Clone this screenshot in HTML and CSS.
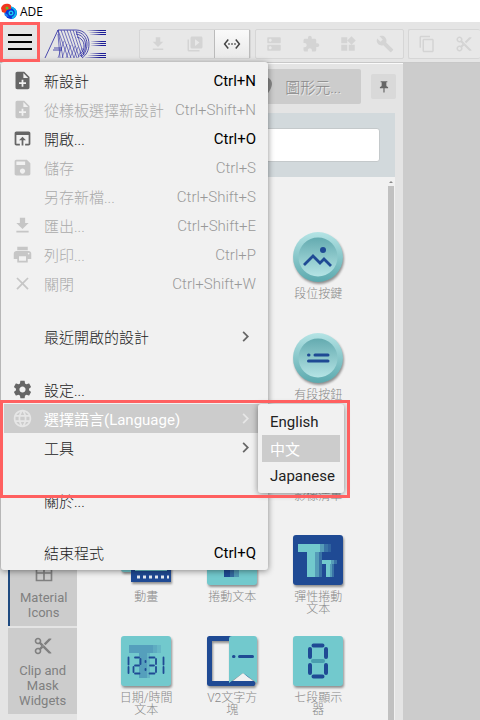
FILE: index.html
```html
<!DOCTYPE html>
<html lang="zh-Hant">
<head>
<meta charset="utf-8">
<meta name="viewport" content="width=device-width, initial-scale=1">
<title>ADE</title>
<link rel="stylesheet" href="styles.css">
</head>
<body>
<svg class="sprite" aria-hidden="true">
  <symbol id="note-add" viewBox="0 0 24 24"><path d="M14 2H6c-1.1 0-1.99.9-1.99 2L4 20c0 1.1.89 2 1.99 2H18c1.1 0 2-.9 2-2V8l-6-6zm2 14h-3v3h-2v-3H8v-2h3v-3h2v3h3v2zm-3-7V3.5L18.500 9H13z"/></symbol>
  <symbol id="open" viewBox="0 0 24 24"><path d="M19 4H5c-1.110 0-2 .9-2 2v12c0 1.1.89 2 2 2h4v-2H5V8h14v10h-4v2h4c1.100 0 2-.9 2-2V6c0-1.100-.89-2-2-2zm-7 6l-4 4h3v6h2v-6h3l-4-4z"/></symbol>
  <symbol id="save" viewBox="0 0 24 24"><path d="M17 3H5c-1.110 0-2 .9-2 2v14c0 1.100.89 2 2 2h14c1.100 0 2-.9 2-2V7l-4-4zm-5 16c-1.660 0-3-1.340-3-3s1.340-3 3-3 3 1.340 3 3-1.340 3-3 3zm3-10H5V5h10v4z"/></symbol>
  <symbol id="download" viewBox="0 0 24 24"><path d="M19 9h-4V3H9v6H5l7 7 7-7zM5 18v2h14v-2H5z"/></symbol>
  <symbol id="print" viewBox="0 0 24 24"><path d="M19 8H5c-1.660 0-3 1.340-3 3v6h4v4h12v-4h4v-6c0-1.660-1.340-3-3-3zm-3 11H8v-5h8v5zm3-7c-.55 0-1-.45-1-1s.45-1 1-1 1 .45 1 1-.45 1-1 1zm-1-9H6v4h12V3z"/></symbol>
  <symbol id="close" viewBox="0 0 24 24"><path d="M19 6.410L17.590 5 12 10.590 6.410 5 5 6.410 10.590 12 5 17.590 6.410 19 12 13.410 17.590 19 19 17.590 13.410 12z"/></symbol>
  <symbol id="settings" viewBox="0 0 24 24"><path d="M19.43 12.98c.04-.32.07-.64.07-.98s-.03-.66-.07-.98l2.11-1.65c.19-.15.24-.42.12-.64l-2-3.46c-.12-.22-.39-.3-.61-.22l-2.49 1c-.52-.4-1.08-.73-1.69-.98l-.38-2.65C14.46 2.18 14.25 2 14 2h-4c-.25 0-.46.18-.49.42l-.38 2.65c-.61.25-1.17.59-1.69.98l-2.49-1c-.23-.09-.49 0-.61.22l-2 3.46c-.13.22-.07.49.12.64l2.11 1.65c-.04.32-.07.65-.07.98s.03.66.07.98l-2.11 1.65c-.19.15-.24.42-.12.64l2 3.46c.12.22.39.3.61.22l2.49-1c.52.4 1.08.73 1.69.98l.38 2.65c.03.24.24.42.49.42h4c.25 0 .46-.18.49-.42l.38-2.65c.61-.25 1.17-.59 1.69-.98l2.49 1c.23.09.49 0 .61-.22l2-3.46c.12-.22.07-.49-.12-.64l-2.11-1.65zM12 15.5c-1.93 0-3.5-1.57-3.5-3.5s1.57-3.5 3.5-3.5 3.5 1.57 3.5 3.5-1.57 3.5-3.5 3.5z"/></symbol>
  <symbol id="globe" viewBox="0 0 24 24"><path d="M11.99 2C6.47 2 2 6.48 2 12s4.47 10 9.99 10C17.52 22 22 17.52 22 12S17.52 2 11.99 2zm6.93 6h-2.95c-.32-1.25-.78-2.45-1.38-3.56 1.84.63 3.37 1.91 4.33 3.56zM12 4.04c.83 1.2 1.48 2.53 1.91 3.96h-3.82c.43-1.43 1.08-2.76 1.91-3.96zM4.26 14C4.1 13.36 4 12.69 4 12s.1-1.36.26-2h3.38c-.08.66-.14 1.32-.14 2 0 .68.06 1.34.14 2H4.26zm.82 2h2.95c.32 1.25.78 2.45 1.38 3.56-1.84-.63-3.37-1.9-4.33-3.56zm2.95-8H5.08c.96-1.66 2.49-2.93 4.33-3.56C8.81 5.55 8.35 6.75 8.03 8zM12 19.96c-.83-1.2-1.48-2.53-1.91-3.96h3.82c-.43 1.43-1.08 2.76-1.91 3.96zM14.34 14H9.66c-.09-.66-.16-1.32-.16-2 0-.68.07-1.35.16-2h4.68c.09.65.16 1.32.16 2 0 .68-.07 1.34-.16 2zm.25 5.56c.6-1.11 1.06-2.31 1.38-3.56h2.95c-.96 1.65-2.49 2.93-4.33 3.56zM16.36 14c.08-.66.14-1.32.14-2 0-.68-.06-1.34-.14-2h3.38c.16.64.26 1.31.26 2s-.1 1.36-.26 2h-3.38z"/></symbol>
  <symbol id="chevron" viewBox="0 0 24 24"><path d="M10 6L8.59 7.41 13.17 12l-4.58 4.59L10 18l6-6z"/></symbol>
  <symbol id="video" viewBox="0 0 24 24"><path d="M4 6H2v14c0 1.1.9 2 2 2h14v-2H4V6zm16-4H8c-1.1 0-2 .9-2 2v12c0 1.1.9 2 2 2h12c1.1 0 2-.9 2-2V4c0-1.1-.9-2-2-2zm-8 12.5v-9l6 4.5-6 4.5z"/></symbol>
  <symbol id="connect" viewBox="0 0 24 24"><path d="M7.77 6.76L6.23 5.48.82 12l5.41 6.52 1.54-1.28L3.42 12l4.35-5.24zM7 13h2v-2H7v2zm10-2h-2v2h2v-2zm-6 2h2v-2h-2v2zm6.77-7.52l-1.54 1.28L20.58 12l-4.35 5.24 1.54 1.28L23.18 12l-5.41-6.52z"/></symbol>
  <symbol id="dns" viewBox="0 0 24 24"><path d="M20 13H4c-.55 0-1 .45-1 1v6c0 .55.45 1 1 1h16c.55 0 1-.45 1-1v-6c0-.55-.45-1-1-1zM7 19c-1.1 0-2-.9-2-2s.9-2 2-2 2 .9 2 2-.9 2-2 2zM20 3H4c-.55 0-1 .45-1 1v6c0 .55.45 1 1 1h16c.55 0 1-.45 1-1V4c0-.55-.45-1-1-1zM7 9c-1.1 0-2-.9-2-2s.9-2 2-2 2 .9 2 2-.9 2-2 2z"/></symbol>
  <symbol id="extension" viewBox="0 0 24 24"><path d="M20.5 11H19V7c0-1.1-.9-2-2-2h-4V3.5C13 2.12 11.88 1 10.5 1S8 2.12 8 3.5V5H4c-1.1 0-1.99.9-1.99 2v3.8H3.5c1.49 0 2.7 1.21 2.7 2.7s-1.21 2.7-2.7 2.7H2V20c0 1.1.9 2 2 2h3.8v-1.5c0-1.49 1.21-2.7 2.7-2.7 1.49 0 2.7 1.21 2.7 2.7V22H17c1.1 0 2-.9 2-2v-4h1.5c1.38 0 2.500-1.12 2.500-2.5S21.88 11 20.5 11z"/></symbol>
  <symbol id="widgets" viewBox="0 0 24 24"><path d="M13 13v8h8v-8h-8zM3 21h8v-8H3v8zM3 3v8h8V3H3zm13.66-1.31L11 7.34 16.66 13l5.66-5.66-5.66-5.65z"/></symbol>
  <symbol id="build" viewBox="0 0 24 24"><path d="M22.7 19l-9.1-9.1c.9-2.3.4-5-1.5-6.9-2-2-5-2.4-7.4-1.3L9 6 6 9 1.6 4.7C.4 7.1.9 10.1 2.9 12.1c1.9 1.9 4.6 2.4 6.9 1.5l9.1 9.1c.4.4 1 .4 1.4 0l2.3-2.3c.5-.4.5-1.1.1-1.4z"/></symbol>
  <symbol id="copy" viewBox="0 0 24 24"><path d="M16 1H4c-1.1 0-2 .9-2 2v14h2V3h12V1zm3 4H8c-1.1 0-2 .9-2 2v14c0 1.1.9 2 2 2h11c1.1 0 2-.9 2-2V7c0-1.1-.9-2-2-2zm0 16H8V7h11v14z"/></symbol>
  <symbol id="cut" viewBox="0 0 24 24"><path d="M9.64 7.64c.23-.5.36-1.05.36-1.64 0-2.21-1.79-4-4-4S2 3.79 2 6s1.79 4 4 4c.59 0 1.14-.13 1.64-.36L10 12l-2.36 2.36C7.14 14.13 6.59 14 6 14c-2.21 0-4 1.79-4 4s1.79 4 4 4 4-1.79 4-4c0-.59-.13-1.14-.36-1.64L12 14l7 7h3v-1L9.64 7.64zM6 8c-1.1 0-2-.89-2-2s.9-2 2-2 2 .89 2 2-.9 2-2 2zm0 12c-1.1 0-2-.89-2-2s.9-2 2-2 2 .89 2 2-.9 2-2 2zm6-7.5c-.28 0-.5-.22-.5-.5s.22-.5.5-.5.5.22.5.5-.22.5-.5.5zM19 3l-6 6 2 2 7-7V3z"/></symbol>
  <symbol id="place" viewBox="0 0 24 24"><path d="M12 2C8.13 2 5 5.13 5 9c0 5.25 7 13 7 13s7-7.75 7-13c0-3.87-3.13-7-7-7zm0 9.5c-1.38 0-2.5-1.12-2.5-2.5s1.12-2.5 2.5-2.5 2.5 1.12 2.5 2.5-1.12 2.5-2.5 2.5z"/></symbol>
  <symbol id="pin" viewBox="0 0 24 24"><path d="M16 9V4h1c.55 0 1-.45 1-1s-.45-1-1-1H7c-.55 0-1 .45-1 1s.45 1 1 1h1v5c0 1.66-1.34 3-3 3v2h5.97v7l1 1 1-1v-7H19v-2c-1.66 0-3-1.34-3-3z"/></symbol>
  <symbol id="grid" viewBox="0 0 24 24"><path fill="none" stroke="currentColor" stroke-width="2" d="M3 2h18v19H3zM12 2v19M3 12h18"/></symbol>
</svg>

<header class="titlebar">
  <svg class="app-icon" viewBox="0 0 16 16" aria-hidden="true">
    <circle cx="10" cy="10" r="6" fill="#0a35d8"/>
    <path d="M5 5c3-2 7-1 9 2s0 7-3 8" fill="none" stroke="#0cb7ee" stroke-width="2"/>
    <circle cx="10" cy="10" r="2.500" fill="#19c9f2"/><circle cx="10" cy="10" r="1" fill="#0726a8"/>
    <path d="M0 5C1 1 5 0 8 1s2 3 2 5L6 7l-2 3-3-1z" fill="#f2361d"/>
    <path d="M3 10l3 1 2 3-4-1z" fill="#1d7df0"/>
    <circle cx="6" cy="5" r="1.500" fill="#58c22e"/>
  </svg>
  <span>ADE</span>
</header>

<div class="toolbar">
  <button class="menu-button" aria-label="Menu"><i></i><i></i><i></i></button>
  <svg class="logo" viewBox="0 0 62 30" aria-hidden="true">
    <defs>
      <linearGradient id="fade" x1="0" x2="1"><stop offset="0" stop-color="#1c1c96" stop-opacity=".1"/><stop offset=".7" stop-color="#1c1c96"/></linearGradient>
    </defs>
    <g fill="none" stroke="#2424a0" stroke-width=".8">
      <path d="M1 29L14 1M10 19h8M9 21h9"/>
      <path d="M14 1L24 29M17 1L27 29M20 1L30 29M23 1L33 29M26 1L35 28M29 1L38 28M32 2L40 26M14 1L19 29M14 5L16 29" opacity=".75"/>
      <path d="M14 29L20 12M18 29L23 15M22 29L27 16M26 29L31 17M30 29L34 18M34 29L38 19" opacity=".6"/>
      <path d="M14 1H32C41 1 45 8 45 15S42 26 38 29M32 3C39 3 43 9 43 15S40 26 37 28M32 5C38 6 41.500 10 41.500 16S39 25 36 27M33 8C37 9 40 12 40 17S38 23 36 25"/>
    </g>
    <g fill="url(#fade)">
      <rect x="43" y="1" width="19" height="1"/><rect x="45" y="3" width="17" height="1"/><rect x="46" y="5" width="16" height="1"/>
      <rect x="47" y="12" width="15" height="1"/><rect x="47" y="14" width="15" height="1"/><rect x="47" y="16" width="15" height="1"/>
      <rect x="46" y="24" width="16" height="1"/><rect x="44" y="26" width="18" height="1"/><rect x="41" y="28" width="21" height="1"/>
    </g>
  </svg>
  <div class="tool-group">
    <button disabled aria-label="Download"><svg><use href="#download"/></svg></button>
    <button disabled aria-label="Simulate"><svg><use href="#video"/></svg></button>
    <button class="active" aria-label="Connect"><svg><use href="#connect"/></svg></button>
  </div>
  <div class="tool-group">
    <button disabled aria-label="Resources"><svg><use href="#dns"/></svg></button>
    <button disabled aria-label="Extensions"><svg><use href="#extension"/></svg></button>
    <button disabled aria-label="Widgets"><svg><use href="#widgets"/></svg></button>
    <button disabled aria-label="Tools"><svg><use href="#build"/></svg></button>
  </div>
  <div class="tool-group tail">
    <button disabled aria-label="Copy"><svg><use href="#copy"/></svg></button>
    <button disabled aria-label="Cut"><svg><use href="#cut"/></svg></button>
  </div>

  <nav class="menu">
    <ul>
      <li><button><svg><use href="#note-add"/></svg><span>新設計</span><kbd>Ctrl+N</kbd></button></li>
      <li><button disabled><svg><use href="#note-add"/></svg><span>從樣板選擇新設計</span><kbd>Ctrl+Shift+N</kbd></button></li>
      <li><button><svg><use href="#open"/></svg><span>開啟...</span><kbd>Ctrl+O</kbd></button></li>
      <li><button disabled><svg><use href="#save"/></svg><span>儲存</span><kbd>Ctrl+S</kbd></button></li>
      <li><button disabled><svg></svg><span>另存新檔...</span><kbd>Ctrl+Shift+S</kbd></button></li>
      <li><button disabled><svg><use href="#download"/></svg><span>匯出...</span><kbd>Ctrl+Shift+E</kbd></button></li>
      <li><button disabled><svg><use href="#print"/></svg><span>列印...</span><kbd>Ctrl+P</kbd></button></li>
      <li><button disabled><svg><use href="#close"/></svg><span>關閉</span><kbd>Ctrl+Shift+W</kbd></button></li>
      <li class="split"><button><svg></svg><span>最近開啟的設計</span><svg class="more"><use href="#chevron"/></svg></button></li>
      <li class="split"><button><svg><use href="#settings"/></svg><span>設定...</span></button></li>
      <li class="selected">
        <button><svg><use href="#globe"/></svg><span>選擇語言(Language)</span><svg class="more"><use href="#chevron"/></svg></button>
        <ul class="submenu">
          <li><button>English</button></li>
          <li><button class="current">中文</button></li>
          <li><button>Japanese</button></li>
        </ul>
      </li>
      <li><button><svg></svg><span>工具</span><svg class="more"><use href="#chevron"/></svg></button></li>
      <li class="split"><button><svg></svg><span>關於...</span></button></li>
      <li class="split"><button><svg></svg><span>結束程式</span><kbd>Ctrl+Q</kbd></button></li>
    </ul>
  </nav>
</div>

<main class="workspace">
  <section class="panel">
    <div class="panel-head">
      <button class="panel-tab"><svg><use href="#place"/></svg><span>圖形元...</span></button>
      <button class="pin" aria-label="Pin"><svg><use href="#pin"/></svg></button>
    </div>
    <div class="panel-body">
      <div class="side-tabs">
        <button class="current"><svg><use href="#grid"/></svg>Material Icons</button>
        <button><svg><use href="#cut"/></svg>Clip and Mask Widgets</button>
      </div>
      <div class="library">
        <div class="search"><input type="text" aria-label="Search"></div>
        <div class="scroll">
          <div class="tiles">
            <figure class="c3 r1">
              <svg viewBox="0 0 50 50"><defs><linearGradient id="rim" x2="0" y2="1"><stop stop-color="#b5e4e5"/><stop offset="1" stop-color="#5ba9ae"/></linearGradient><linearGradient id="dish" x2="0" y2="1"><stop stop-color="#64abb0"/><stop offset="1" stop-color="#b5e4e5"/></linearGradient></defs>
                <circle cx="25" cy="25" r="25" fill="url(#rim)"/><circle cx="25" cy="25" r="19.500" fill="url(#dish)"/>
                <circle cx="30" cy="18" r="3" fill="#1f4a94"/><path d="M11 33l9-9 7 7 4-4 7 7" fill="none" stroke="#1f4a94" stroke-width="2.800"/></svg>
              <figcaption>段位按鍵</figcaption>
            </figure>
            <figure class="c3 r2">
              <svg viewBox="0 0 50 50"><circle cx="25" cy="25" r="25" fill="url(#rim)"/><circle cx="25" cy="25" r="19.500" fill="url(#dish)"/>
                <path d="M15.500 22h.5M22 22h13M15.500 28h19.500" fill="none" stroke="#1f4a94" stroke-width="3" stroke-linecap="round"/></svg>
              <figcaption>有段按鈕</figcaption>
            </figure>
            <figure class="c3 r3">
              <svg viewBox="0 0 50 50"><rect x="2" y="3" width="46" height="44" rx="3" fill="#72c9cd"/></svg>
              <figcaption>影像清單</figcaption>
            </figure>
            <figure class="c1 r4">
              <svg viewBox="0 0 50 50"><rect x="0" y="2" width="14" height="35" rx="3" fill="#72c9cd"/><rect x="10" y="8" width="40" height="39" fill="#1f4a94"/><rect x="14" y="14" width="32" height="22" fill="#72c9cd"/>
                <path d="M16 42h32" stroke="#e4e9ef" stroke-width="3" stroke-dasharray="3 3"/></svg>
              <figcaption>動畫</figcaption>
            </figure>
            <figure class="c2 r4">
              <svg viewBox="0 0 50 50"><rect width="50" height="50" rx="3" fill="#72c9cd"/><rect x="17" y="14" width="6" height="28" fill="#1f4a94"/><rect x="23" y="14" width="4" height="28" fill="#34699f"/><rect x="27" y="14" width="5" height="28" fill="#5198b4"/></svg>
              <figcaption>捲動文本</figcaption>
            </figure>
            <figure class="c3 r4">
              <svg viewBox="0 0 50 50"><rect width="50" height="50" rx="3" fill="#1f4a94"/>
                <g fill="#72c9cd"><rect x="5" y="9" width="22" height="8"/><rect x="14" y="9" width="8" height="33"/><rect x="28" y="25" width="10" height="4"/><rect x="33" y="25" width="4" height="17"/></g>
                <g fill="#559cb8"><rect x="27" y="9" width="4" height="8"/><rect x="22" y="17" width="4" height="25"/><rect x="38" y="25" width="3" height="4"/><rect x="37" y="29" width="2" height="13"/></g>
                <g fill="#3a73a6"><rect x="31" y="9" width="4" height="8"/><rect x="26" y="17" width="3" height="25"/><rect x="41" y="25" width="3" height="4"/><rect x="39" y="29" width="2" height="13"/><rect x="35" y="9" width="3" height="8" opacity=".6"/></g></svg>
              <figcaption>彈性捲動文本</figcaption>
            </figure>
            <figure class="c1 r5">
              <svg viewBox="0 0 50 50"><rect width="50" height="50" rx="3" fill="#72c9cd"/>
                <g fill="#559fbc"><rect x="8" y="9" width="24" height="8"/><rect x="18" y="17" width="8" height="25"/><rect x="32" y="9" width="4" height="8" opacity=".7"/><rect x="36" y="9" width="4" height="8" opacity=".4"/><rect x="26" y="17" width="3" height="25" opacity=".5"/></g>
                <path d="M7.500 21.500v7M7.500 31v6M14 21.500h4M19.500 23v5M14 29.500h4M12.500 31v5M14 37.500h4.500M28.500 21.500h5M35 23v5M29 29.500h4M35 31v5M28.500 37.500h5M42.500 21.500v7M42.500 31v6M24.500 25v1M24.500 33v1" fill="none" stroke="#1f4a94" stroke-width="1.800" stroke-linecap="round"/></svg>
              <figcaption>日期/時間文本</figcaption>
            </figure>
            <figure class="c2 r5">
              <svg viewBox="0 0 50 50"><path d="M2.500 2.500H40V47.500H2.500z" fill="none" stroke="#1f4a94" stroke-width="5" stroke-linejoin="round"/><path d="M5 45h42a3 3 0 0 1 0 5H5z" fill="#1f4a94"/>
                <path d="M26 45l10-8 10 8z" fill="#f1f1f1"/><path d="M22 47V3a3 3 0 0 1 3-3h22a3 3 0 0 1 3 3v44L36 37z" fill="#72c9cd"/>
                <path d="M26.500 20.500h.5M32.500 20.500h13" stroke="#1f4a94" stroke-width="3" stroke-linecap="round"/></svg>
              <figcaption>V2文字方塊</figcaption>
            </figure>
            <figure class="c3 r5">
              <svg viewBox="0 0 50 50"><rect width="50" height="50" rx="3" fill="#72c9cd"/><path d="M20 25h10" stroke="#4a9eaf" stroke-width="4" stroke-linecap="round"/>
                <path d="M20.500 9.500h9M20.500 40.500h9M17 13v8M33 13v8M17 29v8M33 29v8" stroke="#1f4a94" stroke-width="4" stroke-linecap="round"/></svg>
              <figcaption>七段顯示器</figcaption>
            </figure>
          </div>
          <div class="scrollbar"><i class="arrow"></i><i class="thumb"></i></div>
        </div>
      </div>
    </div>
  </section>
  <section class="canvas"></section>
</main>

<div class="mark mark-button"></div>
<div class="mark mark-language"></div>
</body>
</html>
```

FILE: styles.css
```css
* { box-sizing: border-box; }

body {
  margin: 0;
  height: 100vh;
  position: relative;
  display: flex;
  flex-direction: column;
  overflow: hidden;
  background: #ccc;
  color: #222;
  font-family: Roboto, "Noto Sans CJK TC", sans-serif;
  font-size: 15px;
}

button {
  margin: 0;
  padding: 0;
  border: 0;
  background: none;
  color: inherit;
  font: inherit;
}

svg { fill: currentColor; flex: none; }
ul { list-style: none; margin: 0; padding: 0; }
.sprite { position: absolute; width: 0; height: 0; }

.titlebar {
  flex: none;
  display: flex;
  align-items: center;
  gap: 3px;
  height: 22px;
  padding-left: 1px;
  background: #fff;
  color: #000;
  font-family: "Open Sans", sans-serif;
  font-size: 12px;
}
.app-icon { width: 16px; height: 16px; }

.toolbar {
  flex: none;
  position: relative;
  z-index: 2;
  display: flex;
  align-items: flex-end;
  gap: 4px;
  height: 41px;
  padding-bottom: 3px;
  background: #e5e5e5;
  border-bottom: 1px solid #c8c8c8;
}
.menu-button {
  flex: none;
  display: flex;
  flex-direction: column;
  gap: 5px;
  width: 40px;
  padding: 0 8px 9px;
}
.menu-button i { height: 2px; background: #000; }
.logo { width: 62px; height: 30px; margin-right: 29px; }

.tool-group {
  flex: none;
  display: flex;
  gap: 1px;
  height: 30px;
  border: 1px solid #d6d6d6;
  border-radius: 2px;
  background: #e8e8e8;
}
.tool-group button {
  flex: none;
  display: flex;
  align-items: center;
  justify-content: center;
  width: 36px;
  color: #444;
}
.tool-group svg { width: 18px; height: 18px; }
.tool-group button:disabled { color: #d4d4d4; }
.tool-group .active {
  border: solid #bbb;
  border-width: 0 1px;
  background: linear-gradient(#fafafa, #e9e9e9);
}
.tail { flex: 1; min-width: 0; overflow: hidden; border-right: 0; }

.menu {
  position: absolute;
  top: 40px;
  left: 1px;
  width: 267px;
  padding: 4px 3px 3px;
  border-radius: 3px;
  background: #f1f1f1;
  box-shadow: 0 1px 6px rgba(0, 0, 0, .45);
}
.menu li { position: relative; }
.menu button {
  display: flex;
  align-items: center;
  width: 100%;
  height: 29px;
  padding: 0 9px 0 8px;
  text-align: left;
  white-space: nowrap;
}
.menu svg { width: 21px; height: 21px; color: #666; }
.menu span { margin-left: 11px; font-weight: 300; }
.menu kbd { margin-left: auto; font: inherit; color: #000; }
.menu .more { margin-left: auto; }
.menu button:disabled, .menu button:disabled kbd { color: #aaa; }
.menu button:disabled kbd { font-weight: 300; color: #999; }
.menu button:disabled svg { color: #c6c6c6; }
.menu .split { margin-top: 24px; }
.menu .split:last-child { margin-top: 23px; }
.menu .selected > button { background: #ccc; color: #fff; }
.menu .selected > button svg { color: #e6e6e6; }
.menu .selected > button span { font-weight: 400; }

.submenu {
  position: absolute;
  top: 0;
  left: calc(100% - 7px);
  width: 86px;
  padding: 4px;
  border-radius: 3px;
  background: #f1f1f1;
  box-shadow: 0 1px 6px rgba(0, 0, 0, .45);
}
.submenu button { height: 27px; padding: 0 8px; }
.submenu .current { background: #ccc; color: #fff; }

.workspace {
  flex: 1;
  min-height: 0;
  display: flex;
}
.panel {
  flex: 0 1 403px;
  display: flex;
  flex-direction: column;
  border-top: 1px solid #fafafa;
  background: #e4e4e4;
}
.canvas { flex: 1; background: #ccc; }
.panel-head {
  flex: none;
  display: flex;
  align-items: center;
  gap: 10px;
  height: 49px;
  padding: 0 7px 4px 8px;
}
.panel-tab {
  flex: 1;
  display: flex;
  align-items: center;
  justify-content: flex-end;
  gap: 8px;
  height: 35px;
  padding-right: 20px;
  border-radius: 2px;
  background: #ccc;
  color: #888;
  text-shadow: 1px 1px #eee;
  font-weight: 300;
}
.panel-tab svg { width: 24px; height: 24px; }
.pin {
  display: flex;
  align-items: center;
  justify-content: center;
  width: 25px;
  height: 25px;
  border-radius: 2px;
  background: #d9d9d9;
  color: #666;
}
.pin svg { width: 14px; height: 14px; }

.panel-body {
  flex: 1;
  min-height: 0;
  display: flex;
  padding: 0 8px;
}
.side-tabs {
  flex: 0 0 69px;
  display: flex;
  flex-direction: column;
  justify-content: flex-end;
  gap: 2px;
  padding-bottom: 6px;
}
.side-tabs button {
  display: flex;
  flex-direction: column;
  align-items: center;
  gap: 7px;
  padding: 8px 10px 6px;
  background: #ccc;
  color: #808080;
  font-size: 13px;
  line-height: 15px;
  text-align: center;
}
.side-tabs .current { border-left: 2px solid #1f4a80; }
.side-tabs svg { width: 20px; height: 20px; }

.library {
  flex: 1;
  display: flex;
  flex-direction: column;
  background: #f1f1f1;
}
.search {
  padding: 15px 15px 15px 12px;
  background: #d2d9dc;
}
.search input {
  display: block;
  width: 100%;
  height: 34px;
  border: 1px solid #c4c9cb;
  border-radius: 3px;
  background: #fff;
}
.scroll {
  flex: 1;
  min-height: 0;
  display: flex;
  overflow: hidden;
}
.tiles {
  flex: 1;
  display: grid;
  grid-template-columns: repeat(3, 86px);
  grid-auto-rows: 101px;
  justify-content: center;
  padding: 55px 0 0 0;
}
figure {
  display: flex;
  flex-direction: column;
  align-items: center;
  gap: 6px;
  margin: 0;
}
figure svg {
  width: 50px;
  height: 50px;
  filter: drop-shadow(1px 2px 1px rgba(0, 0, 0, .4));
}
figcaption {
  width: 58px;
  color: #888;
  font-size: 12px;
  font-weight: 300;
  line-height: 12px;
  text-align: center;
}
.c1 { grid-column: 1; }
.c2 { grid-column: 2; }
.c3 { grid-column: 3; }
.r1 { grid-row: 1; }
.r2 { grid-row: 2; }
.r3 { grid-row: 3; }
.r4 { grid-row: 4; }
.r5 { grid-row: 5; }

.scrollbar {
  display: flex;
  flex-direction: column;
  align-items: center;
  gap: 3px;
  width: 8px;
  padding: 4px 1px 0 0;
}
.arrow {
  border: 2px solid transparent;
  border-top: 0;
  border-bottom-color: #888;
}
.thumb { flex: 1; width: 6px; background: #c1c1c1; }

/* Callout frames lie over the whole window. */
.mark {
  position: absolute;
  z-index: 3;
  border: 3px solid #ff6060;
  pointer-events: none;
}
.mark-button { left: 0; top: 22px; width: 40px; height: 40px; }
.mark-language { left: 0; top: 400px; width: 350px; height: 98px; }
```
